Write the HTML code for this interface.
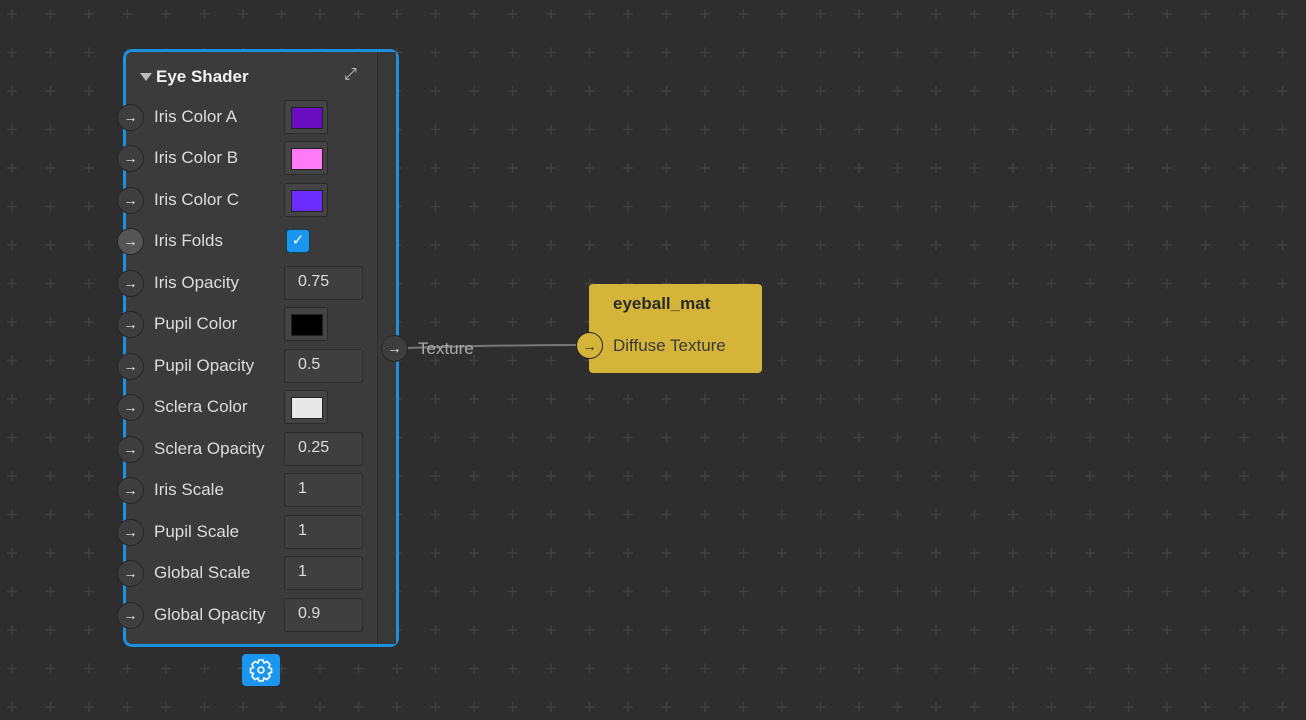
<!DOCTYPE html>
<html><head><style>
body{margin:0;width:1306px;height:720px;overflow:hidden;background:#2e2e2e;
font-family:"Liberation Sans",sans-serif;position:relative}
.node{position:absolute;left:123px;top:49px;width:270px;height:592px;border:3px solid #1f8fe0;border-radius:9px;background:#3b3b3b;}
.scroll{position:absolute;left:251px;top:0;width:1px;height:592px;background:#2c2c2c}
.scroll2{position:absolute;left:252px;top:0;width:18px;height:592px;background:#383838}
.title{position:absolute;left:30px;top:15px;color:#f0f0f0;font-weight:bold;font-size:17px}
.tri{position:absolute;left:14px;top:21px;width:0;height:0;border-left:6px solid transparent;border-right:6px solid transparent;border-top:8px solid #bbb}
.row{position:absolute;left:0;height:34px;width:250px}
.port{position:absolute;left:-9px;top:4px;width:25px;height:25px;border-radius:50%;background:#3e3e3e;border:1px solid #262626;color:#eee;font-size:14px;text-align:center;line-height:24px}
.lbl{position:absolute;left:28px;top:7px;color:#ddd;font-size:17px}
.sw{position:absolute;left:158px;top:0;width:42px;height:32px;border:1px solid #2a2a2a;background:#444;border-radius:3px}
.sw i{position:absolute;left:6px;top:6px;width:30px;height:20px;border:1px solid #222}
.inp{position:absolute;left:158px;top:0;border:1px solid #2a2a2a;background:#3f3f3f;border-radius:3px;color:#ddd;font-size:16px;line-height:30px;padding-left:13px;box-sizing:border-box;width:79px;height:34px}
.cb{position:absolute;left:160px;top:5px;width:22px;height:22px;background:#1a96ee;border-radius:4px;border:1px solid #145;color:#fff;text-align:center;line-height:22px;font-size:15px}
</style></head><body>
<svg width="1306" height="720" style="position:absolute;left:0;top:0">
<defs><pattern id="p" x="-7" y="-5" width="38.5" height="38.5" patternUnits="userSpaceOnUse"><path d="M19 14v10M14 19h10" stroke="#404040" stroke-width="1.5"/></pattern></defs>
<rect width="1306" height="720" fill="url(#p)"/>
<path d="M407 348 Q500 345 580 345" stroke="#777" stroke-width="2" fill="none"/>
</svg>
<div class="node">
<div class="scroll"></div><div class="scroll2"></div>
<div class="tri"></div><div class="title">Eye Shader</div>
<div style="position:absolute;left:218px;top:14px;color:#ccc;font-size:16px">⤢</div>
<div class="row" style="top:48px"><div class="port">→</div><div class="lbl">Iris Color A</div><div class="sw"><i style="background:#6a0cc0"></i></div></div>
<div class="row" style="top:89px"><div class="port">→</div><div class="lbl">Iris Color B</div><div class="sw"><i style="background:#ff7af5"></i></div></div>
<div class="row" style="top:131px"><div class="port">→</div><div class="lbl">Iris Color C</div><div class="sw"><i style="background:#6a2dfb"></i></div></div>
<div class="row" style="top:172px"><div class="port" style="background:#555">→</div><div class="lbl">Iris Folds</div><div class="cb">✓</div></div>
<div class="row" style="top:214px"><div class="port">→</div><div class="lbl">Iris Opacity</div><div class="inp">0.75</div></div>
<div class="row" style="top:255px"><div class="port">→</div><div class="lbl">Pupil Color</div><div class="sw"><i style="background:#000"></i></div></div>
<div class="row" style="top:297px"><div class="port">→</div><div class="lbl">Pupil Opacity</div><div class="inp">0.5</div></div>
<div class="row" style="top:338px"><div class="port">→</div><div class="lbl">Sclera Color</div><div class="sw"><i style="background:#e8e8e8"></i></div></div>
<div class="row" style="top:380px"><div class="port">→</div><div class="lbl">Sclera Opacity</div><div class="inp">0.25</div></div>
<div class="row" style="top:421px"><div class="port">→</div><div class="lbl">Iris Scale</div><div class="inp">1</div></div>
<div class="row" style="top:463px"><div class="port">→</div><div class="lbl">Pupil Scale</div><div class="inp">1</div></div>
<div class="row" style="top:504px"><div class="port">→</div><div class="lbl">Global Scale</div><div class="inp">1</div></div>
<div class="row" style="top:546px"><div class="port">→</div><div class="lbl">Global Opacity</div><div class="inp">0.9</div></div>
</div>
<div style="position:absolute;left:381px;top:335px;width:25px;height:25px;border-radius:50%;background:#3e3e3e;border:1px solid #262626;color:#eee;font-size:14px;text-align:center;line-height:24px">→</div>
<div style="position:absolute;left:418px;top:339px;color:#aaa;font-size:17px">Texture</div>
<div style="position:absolute;left:589px;top:284px;width:173px;height:89px;background:#d4b53a;border-radius:4px">
<div style="position:absolute;left:24px;top:10px;font-weight:bold;color:#2a2a2a;font-size:17px">eyeball_mat</div>
<div style="position:absolute;left:24px;top:52px;color:#3a3a3a;font-size:17px">Diffuse Texture</div>
</div>
<div style="position:absolute;left:576px;top:332px;width:27px;height:27px;border-radius:50%;background:#d4b53a;border:1px solid #222;color:#222;font-size:14px;text-align:center;line-height:26px;box-sizing:border-box">→</div>
<div style="position:absolute;left:242px;top:654px;width:38px;height:32px;background:#1a96ee;border-radius:4px">
<svg width="38" height="32" viewBox="0 0 38 32"><g transform="translate(19,16)" fill="none" stroke="#fff" stroke-width="1.6"><circle r="3"/><path d="M-2 -10h4l1 3 3-1.5 3 3-1.5 3 3 1v4l-3 1 1.5 3-3 3-3-1.5-1 3h-4l-1-3-3 1.5-3-3 1.5-3-3-1v-4l3-1-1.5-3 3-3 3 1.5z"/></g></svg>
</div>
</body></html>
